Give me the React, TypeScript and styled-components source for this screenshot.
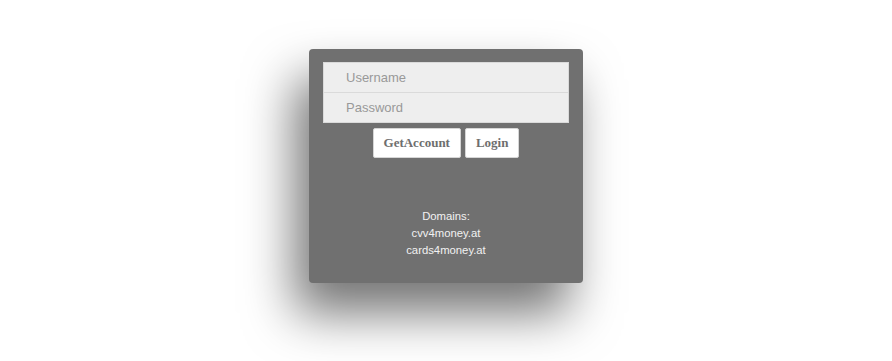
import styled, { createGlobalStyle } from "styled-components";

const GlobalStyle = createGlobalStyle`
  html, body {
    margin: 0;
    padding: 0;
    background: #ffffff;
    font-family: "Liberation Sans", Arial, sans-serif;
  }
`;

const Page = styled.div`
  box-sizing: border-box;
  min-height: 100vh;
  display: flex;
  justify-content: center;
  align-items: flex-start;
  padding-top: 49px;
`;

const Card = styled.div`
  box-sizing: border-box;
  width: 274px;
  height: 234px;
  padding: 13px 14px;
  background: #707070;
  border-radius: 4px;
  box-shadow: -14px 30px 50px rgba(0, 0, 0, 0.55);
  display: flex;
  flex-direction: column;
  align-items: stretch;
`;

const Field = styled.input<{ $first?: boolean }>`
  box-sizing: border-box;
  display: block;
  width: 100%;
  height: ${(p) => (p.$first ? "31px" : "30px")};
  margin: 0;
  padding: 0 22px;
  border: 1px solid #dadada;
  border-top: ${(p) => (p.$first ? "1px solid #dadada" : "none")};
  background: #eeeeee;
  font-family: "Liberation Sans", Arial, sans-serif;
  font-size: 13px;
  color: #555;
  outline: none;

  &::placeholder {
    color: #999999;
  }
`;

const ButtonRow = styled.div`
  display: flex;
  justify-content: center;
  gap: 4px;
  margin-top: 5px;
`;

const Button = styled.button`
  box-sizing: border-box;
  height: 30px;
  padding: 0 10px;
  background: #ffffff;
  border: 1px solid #d6d6d6;
  border-radius: 2px;
  font-family: "Liberation Serif", "Times New Roman", serif;
  font-weight: bold;
  font-size: 13px;
  color: #6e6e6e;
  cursor: pointer;
`;

const Domains = styled.div`
  margin-top: 50px;
  text-align: center;
  font-size: 11.3px;
  line-height: 17px;
  color: #f2f2f2;
`;

export default function App() {
  return (
    <>
      <GlobalStyle />
      <Page>
        <Card>
          <Field $first placeholder="Username" />
          <Field type="password" placeholder="Password" />
          <ButtonRow>
            <Button>GetAccount</Button>
            <Button>Login</Button>
          </ButtonRow>
          <Domains>
            Domains:
            <br />
            cvv4money.at
            <br />
            cards4money.at
          </Domains>
        </Card>
      </Page>
    </>
  );
}
